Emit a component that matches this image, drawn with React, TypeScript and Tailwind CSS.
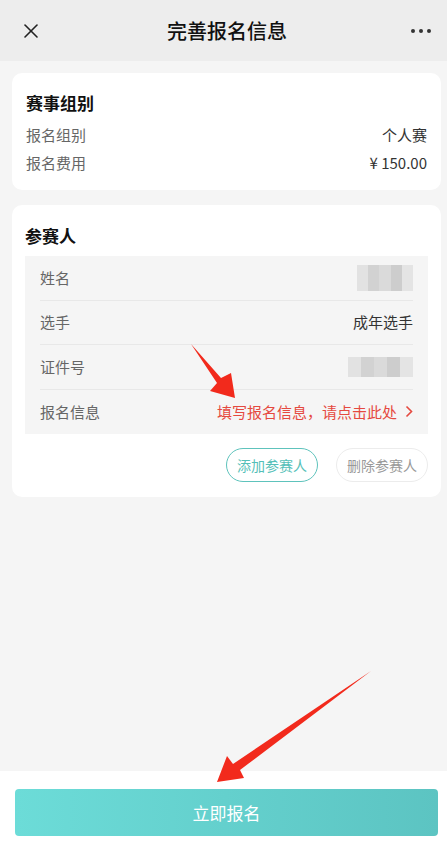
import { X } from 'lucide-react'

const font = { fontFamily: '"Noto Sans CJK SC", "Noto Sans", sans-serif' }

function InfoRow({ label, value }: { label: string; value: React.ReactNode }) {
  return (
    <div className="flex items-center justify-between h-[28px]">
      <span className="text-[15px] text-[#666]">{label}</span>
      <span className="text-[15px] text-[#333]">{value}</span>
    </div>
  )
}

function Blur({ w, h }: { w: number; h: number }) {
  // 打码的区域
  return (
    <span className="flex" style={{ width: w, height: h }}>
      <span className="flex-1 bg-[#e2e2e2]" />
      <span className="flex-1 bg-[#d2d2d2]" />
      <span className="flex-1 bg-[#dadada]" />
      <span className="flex-1 bg-[#cdcdcd]" />
      <span className="flex-1 bg-[#e4e4e4]" />
    </span>
  )
}

function PlayerRow({ label, children, last }: { label: string; children: React.ReactNode; last?: boolean }) {
  return (
    <div className={`flex items-center justify-between h-[44.5px] ${last ? '' : 'border-b border-[#e8e8e8]'}`}>
      <span className="text-[15px] text-[#666]">{label}</span>
      {children}
    </div>
  )
}

export default function App() {
  return (
    <div style={font} className="relative w-[447px] h-[847px] flex flex-col bg-[#f5f5f5] overflow-hidden">
      {/* header */}
      <div className="h-[61px] shrink-0 bg-[#ededed] flex items-center justify-between pl-[19px] pr-[16px]">
        <X className="w-[24px] h-[24px] text-[#222]" strokeWidth={1.6} />
        <span className="text-[20px] text-[#111] font-medium">完善报名信息</span>
        <span className="flex gap-[4px]">
          <span className="w-[4px] h-[4px] rounded-full bg-[#333]" />
          <span className="w-[4px] h-[4px] rounded-full bg-[#333]" />
          <span className="w-[4px] h-[4px] rounded-full bg-[#333]" />
        </span>
      </div>

      <div className="flex-1 flex flex-col gap-[15px] pl-[12px] pr-[6px] pt-[12px]">
        {/* 赛事组别 */}
        <div className="bg-white rounded-[10px] px-[14px] pt-[17px] pb-[13px]">
          <div className="text-[17px] font-bold text-[#111] leading-[26px] mb-[5px]">赛事组别</div>
          <InfoRow label="报名组别" value="个人赛" />
          <InfoRow label="报名费用" value="¥ 150.00" />
        </div>

        {/* 参赛人 */}
        <div className="bg-white rounded-[10px] px-[13px] pt-[18px] pb-[15px]">
          <div className="text-[17px] font-bold text-[#111] leading-[26px] mb-[7px]">参赛人</div>
          <div className="bg-[#f5f5f5] px-[15px]">
            <PlayerRow label="姓名">
              <Blur w={56} h={26} />
            </PlayerRow>
            <PlayerRow label="选手">
              <span className="text-[15px] text-[#333]">成年选手</span>
            </PlayerRow>
            <PlayerRow label="证件号">
              <Blur w={65} h={20} />
            </PlayerRow>
            <PlayerRow label="报名信息" last>
              <span className="flex items-center gap-[8px] text-[15px] text-[#e5493f]">
                填写报名信息，请点击此处
                <svg width="8" height="13" viewBox="0 0 8 13" fill="none">
                  <path d="M1.5 1.5L6.5 6.5L1.5 11.5" stroke="#e5493f" strokeWidth="1.6" />
                </svg>
              </span>
            </PlayerRow>
          </div>
          <div className="flex justify-end gap-[18px] mt-[14px]">
            <button className="h-[34px] px-[10px] rounded-full border border-[#5ec3bc] text-[14px] text-[#55bfb8] bg-white">
              添加参赛人
            </button>
            <button className="h-[34px] px-[10px] rounded-full border border-[#ececec] text-[14px] text-[#999] bg-white">
              删除参赛人
            </button>
          </div>
        </div>
      </div>

      {/* bottom bar */}
      <div className="h-[76px] shrink-0 bg-white pl-[15px] pr-[9px] pt-[18px]">
        <button className="w-full h-[47px] rounded-[4px] bg-gradient-to-r from-[#6cdcd8] to-[#5cc4c2] text-white text-[17px]">
          立即报名
        </button>
      </div>

      {/* red annotation arrows */}
      <svg className="absolute inset-0 pointer-events-none" width="447" height="847" viewBox="0 0 447 847">
        <polygon points="191,344 221,378 231,373 235,398 210,391 217,383" fill="#f22a1c" />
        <polygon points="371,671 240,770 244,778 217,782 227,756 233,764" fill="#f22a1c" />
      </svg>
    </div>
  )
}
